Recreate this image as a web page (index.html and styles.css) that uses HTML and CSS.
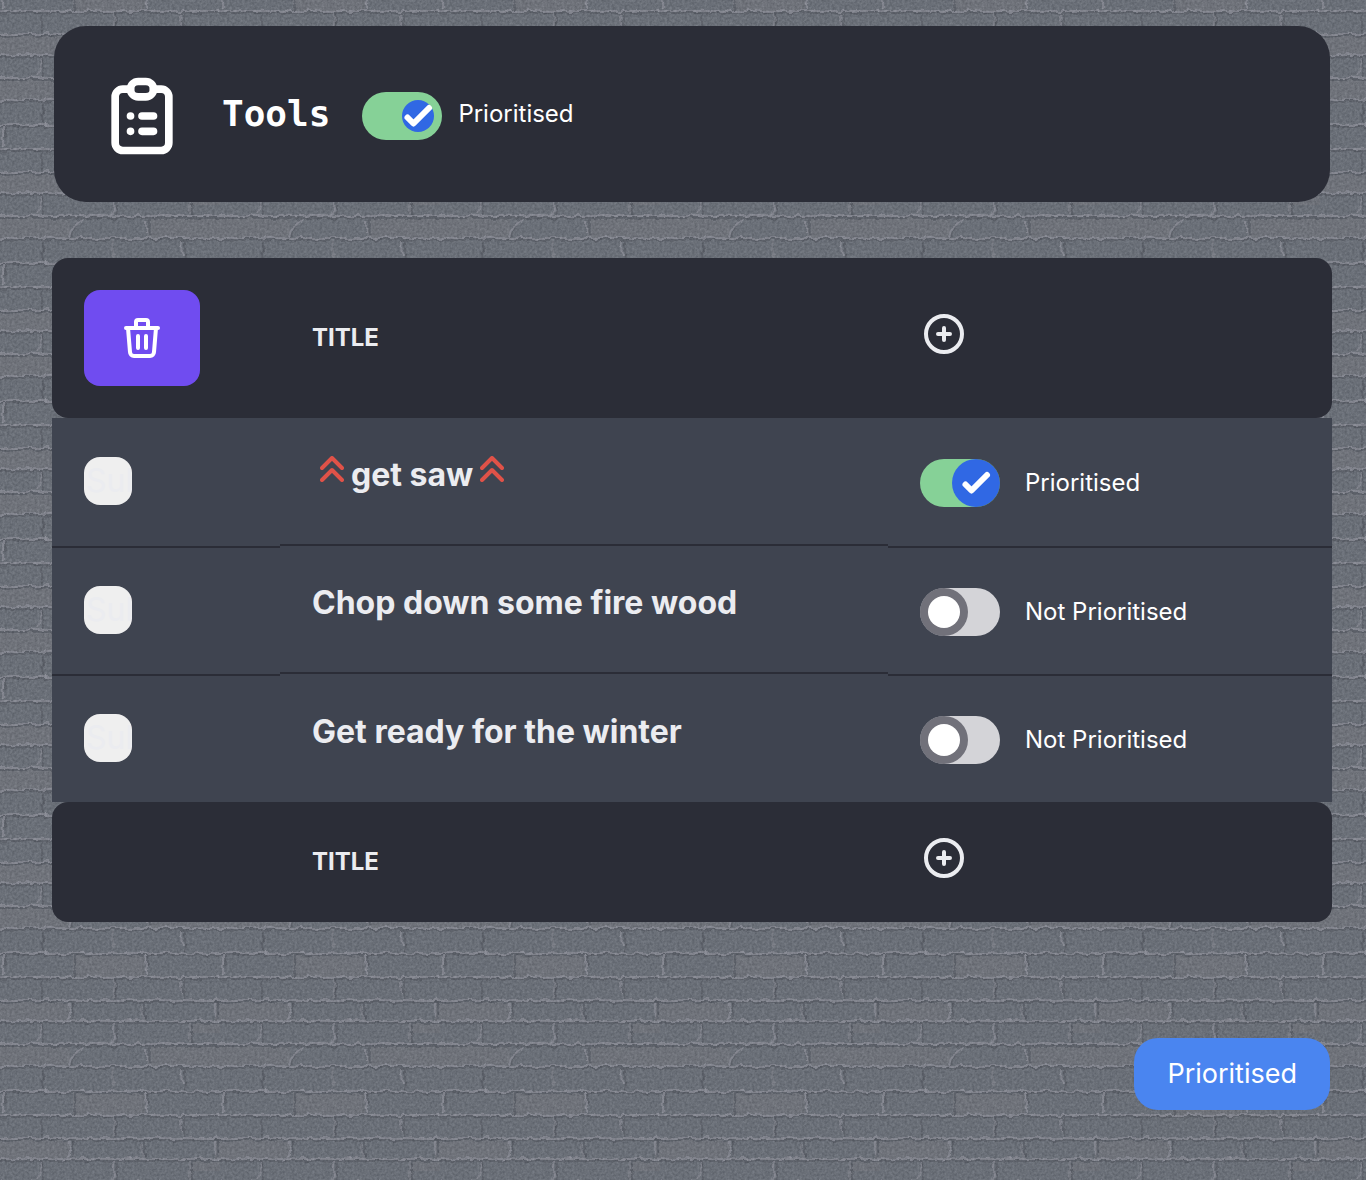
FILE: index.html
```
<!DOCTYPE html>
<html lang="en">
<head>
<meta charset="utf-8">
<meta name="viewport" content="width=device-width, initial-scale=1">
<title>Tools</title>
<link rel="stylesheet" href="styles.css">
</head>
<body>
<svg class="sprite" aria-hidden="true">
  <symbol id="chevrons" viewBox="6 5 12 13"><path d="M7 11l5-5 5 5M7 17l5-5 5 5"/></symbol>
  <symbol id="circle-plus" viewBox="0 0 24 24"><circle cx="12" cy="12" r="9"/><path d="M9 12h6M12 9v6"/></symbol>
</svg>
<main class="page">
  <header class="list-header">
    <svg class="icon clipboard" viewBox="0 0 24 24" aria-hidden="true"><path d="M9 5H7a2 2 0 0 0-2 2v12a2 2 0 0 0 2 2h10a2 2 0 0 0 2-2V7a2 2 0 0 0-2-2h-2"/><rect x="9" y="3" width="6" height="4" rx="2"/><path d="M9 12h.01M12 12h3M9 16h.01M12 16h3"/></svg>
    <h1 class="list-name">Tools</h1>
    <input class="toggle toggle-small" type="checkbox" id="list-priority" checked>
    <label class="list-label" for="list-priority">Prioritised</label>
  </header>

  <table class="tasks">
    <colgroup><col class="col-select"><col class="col-title"><col class="col-priority"></colgroup>
    <thead>
      <tr>
        <th><button class="delete" type="button" aria-label="Delete"><svg class="icon" viewBox="0 0 24 24" aria-hidden="true"><path d="M4 7h16M10 11v6M14 11v6M5 7l1 12a2 2 0 0 0 2 2h8a2 2 0 0 0 2-2l1-12M9 7V4a1 1 0 0 1 1-1h4a1 1 0 0 1 1 1v3"/></svg></button></th>
        <th>TITLE</th>
        <th><button class="add" type="button" aria-label="Add task"><svg class="icon"><use href="#circle-plus"/></svg></button></th>
      </tr>
    </thead>
    <tbody>
      <tr>
        <td><button class="select" type="submit">Submit</button></td>
        <td><div class="task urgent"><svg class="chevrons"><use href="#chevrons"/></svg><span>get saw</span><svg class="chevrons"><use href="#chevrons"/></svg></div></td>
        <td><div class="priority"><input class="toggle" type="checkbox" id="p1" checked><label for="p1">Prioritised</label></div></td>
      </tr>
      <tr>
        <td><button class="select" type="submit">Submit</button></td>
        <td><div class="task">Chop down some fire wood</div></td>
        <td><div class="priority"><input class="toggle" type="checkbox" id="p2"><label for="p2">Not Prioritised</label></div></td>
      </tr>
      <tr>
        <td><button class="select" type="submit">Submit</button></td>
        <td><div class="task">Get ready for the winter</div></td>
        <td><div class="priority"><input class="toggle" type="checkbox" id="p3"><label for="p3">Not Prioritised</label></div></td>
      </tr>
    </tbody>
    <tfoot>
      <tr>
        <th></th>
        <th>TITLE</th>
        <th><button class="add" type="button" aria-label="Add task"><svg class="icon"><use href="#circle-plus"/></svg></button></th>
      </tr>
    </tfoot>
  </table>
</main>
<div class="toast" role="status">Prioritised</div>
</body>
</html>
```
FILE: styles.css
```
* { box-sizing: border-box; }

body {
  margin: 0;
  min-height: 100vh;
  color: #fff;
  font: 24px/32px Inter, "Liberation Sans", sans-serif;
  background-color: #6c717a;
  /* Brick wall tile: mortar highlights, their shadows and a fine grain */
  background-image: url("data:image/svg+xml,%3Csvg xmlns='http://www.w3.org/2000/svg' width='220' height='138' color-interpolation-filters='sRGB'%3E%3Cfilter id='g' x='0' y='0' width='100%25' height='100%25'%3E%3CfeTurbulence type='fractalNoise' baseFrequency='.4' numOctaves='3' seed='4' stitchTiles='stitch'/%3E%3CfeColorMatrix values='1 0 0 0 0 1 0 0 0 0 1 0 0 0 0 0 0 0 0 .16'/%3E%3C/filter%3E%3Cfilter id='r' x='0' y='0' width='220' height='138' filterUnits='userSpaceOnUse'%3E%3CfeTurbulence type='fractalNoise' baseFrequency='.12' numOctaves='2' seed='7' stitchTiles='stitch'/%3E%3CfeDisplacementMap in='SourceGraphic' scale='6' xChannelSelector='R' yChannelSelector='G'/%3E%3CfeGaussianBlur stdDeviation='.5'/%3E%3C/filter%3E%3Crect width='220' height='138' fill='%23666c76'/%3E%3Cpath fill='%236c7079' d='M73 -13h72v24h-72zM0 34h70v21H0zM215 34h5v21h-5zM190 55h30v12h-30zM0 78h70v22H0zM148 78h72v22h-72zM73 125h72v13h-72z'/%3E%3Cg filter='url(%23r)' fill='none'%3E%3Cpath stroke='%23575c66' stroke-width='2' d='M-5 13h230M-5 36h230M-5 57h230M-5 80h230M-5 102h230M-5 127h230M42 13v20M75 0v10M75 127v14M116 13v20M184 13v20M73 37v17M144 37v16M218 37v16M43 57v20M117 57v20M192 57v20M72 98q2-14 14-18M150 80v18M43 103v20M185 103v20M5 127v14M148 127v14'/%3E%3Cpath stroke='%23828590' stroke-width='2' d='M-5 11h230M-5 34h230M-5 55h230M-5 78h230M-5 100h230M-5 125h230M181 14l1 15M3 127v14M3 0v9M146 127v14M146 0v9M70 38v13l-7 5M215 37v14M42 58l-4 18M114 57v16l-5 6M70 98q2-12 14-16M147 84v12M181 103l1 16'/%3E%3Cpath stroke='%23737781' stroke-width='2' d='M114 13v18M142 40v14M190 57v18M113 103v18'/%3E%3C/g%3E%3Crect width='220' height='138' filter='url(%23g)'/%3E%3C/svg%3E");
}

button, input { margin: 0; border: 0; padding: 0; font: inherit; color: inherit; }
button, input, label { cursor: pointer; }

.sprite { position: absolute; width: 0; height: 0; }

.icon, #chevrons, #circle-plus {
  fill: none;
  stroke: currentColor;
  stroke-width: 2;
  stroke-linecap: round;
  stroke-linejoin: round;
}
.icon { display: block; width: 48px; height: 48px; }

.page { padding: 26px 34px 64px 52px; }

.list-header {
  display: flex;
  align-items: center;
  margin: 0 2px 56px;
  padding: 44px 42px 40px;
  border-radius: 32px;
  background: #2b2d37;
}
.clipboard { width: 92px; height: 92px; }
.list-name {
  margin: 0 32px 4px 34px;
  font: bold 36px/40px "DejaVu Sans Mono", monospace;
}
.list-label { margin: 0 0 4px 16px; }

.toggle {
  appearance: none;
  flex: none;
  width: 80px;
  height: 48px;
  border-radius: 24px;
  background: #d4d4d8 url("data:image/svg+xml,%3Csvg xmlns='http://www.w3.org/2000/svg' width='48' height='48'%3E%3Ccircle cx='24' cy='24' r='24' fill='%2371717a'/%3E%3Ccircle cx='24' cy='24' r='16' fill='white'/%3E%3C/svg%3E") left no-repeat;
}
.toggle:checked {
  background: #86d197 url("data:image/svg+xml,%3Csvg xmlns='http://www.w3.org/2000/svg' width='48' height='48'%3E%3Ccircle cx='24' cy='24' r='24' fill='%233068e4'/%3E%3Cpath d='M13.5 25.5l6 6 15.500-15.500' fill='none' stroke='white' stroke-width='6' stroke-linecap='round' stroke-linejoin='round'/%3E%3C/svg%3E") right no-repeat;
}
.toggle-small:checked {
  background-image: url("data:image/svg+xml,%3Csvg xmlns='http://www.w3.org/2000/svg' width='48' height='48'%3E%3Ccircle cx='24' cy='24' r='16' fill='%233068e4'/%3E%3Cpath d='M13.5 25.5l6 6 15.500-15.500' fill='none' stroke='white' stroke-width='6' stroke-linecap='round' stroke-linejoin='round'/%3E%3C/svg%3E");
}

.tasks {
  width: 100%;
  table-layout: fixed;
  border-collapse: separate;
  border-spacing: 0;
}
.col-select { width: 17.8125%; }
.col-title { width: 47.5%; }

.tasks th, .tasks td { padding: 0 32px; text-align: left; }

.tasks th { color: #ebecf0; background: #2b2d37; font-weight: 700; }
.tasks thead th { height: 160px; }
.tasks tfoot th { height: 120px; }
.tasks th:first-child { border-radius: 16px 0 0 16px; }
.tasks th:last-child { border-radius: 0 16px 16px 0; }

.tasks td {
  height: 128px;
  border: 0 solid #2b2d37;
  background: #3f4450;
}
.tasks tr:not(:first-child) td:not(:nth-child(2)) { border-top-width: 2px; }
.tasks tr:not(:last-child) td:nth-child(2) { border-bottom-width: 2px; }

.delete {
  display: grid;
  place-items: center;
  width: 116px;
  height: 96px;
  border-radius: 16px;
  background: #704cf0;
  color: #fff;
}
.add { display: block; margin-bottom: 8px; background: none; }

.select {
  display: block;
  width: 48px;
  height: 48px;
  margin-bottom: 2px;
  padding-left: 2px;
  overflow: hidden;
  border-radius: 16px;
  background: #efefef;
  color: #ebecf0;
  font-size: 32px;
  text-align: left;
}

.task {
  display: flex;
  align-items: center;
  padding-bottom: 12px;
  color: #ebecf0;
  font-size: 32px;
  font-weight: 700;
  line-height: 40px;
}
.urgent { gap: 7px; padding-left: 8px; }
.chevrons { width: 24px; height: 26px; margin-bottom: 12px; color: #e05248; }

.priority { display: flex; align-items: center; gap: 25px; padding-top: 2px; }

.toast {
  position: fixed;
  right: 36px;
  bottom: 70px;
  padding: 16px 33px;
  border-radius: 24px;
  background: #4a85f0;
  font-size: 27px;
  line-height: 40px;
}
```
